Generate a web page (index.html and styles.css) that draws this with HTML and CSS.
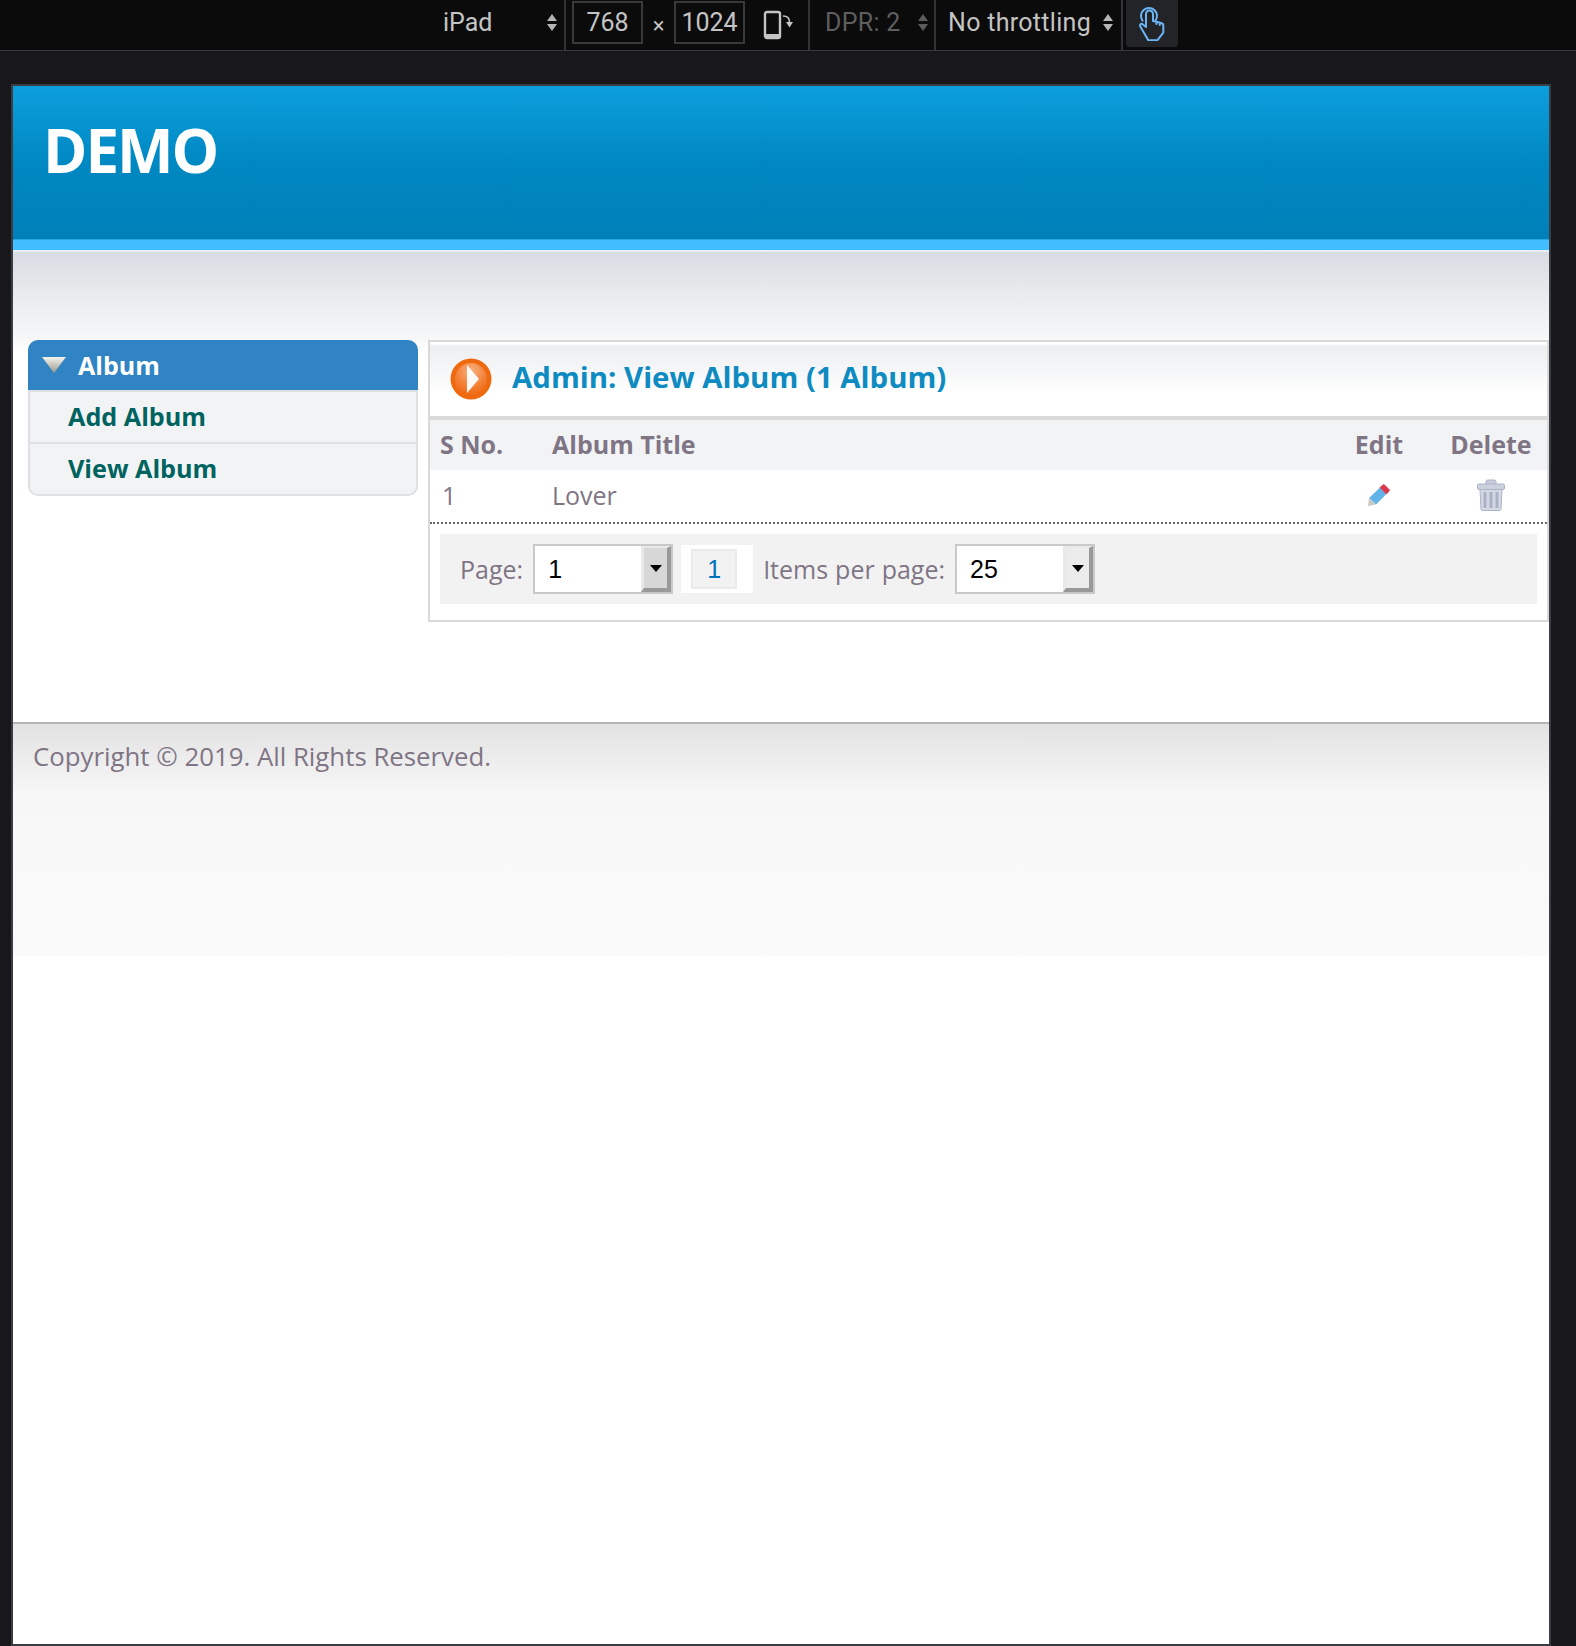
FILE: index.html
```html
<!DOCTYPE html>
<html lang="en">
<head>
<meta charset="utf-8">
<title>Admin: View Album</title>
<link rel="stylesheet" href="styles.css">
</head>
<body>
<div class="toolbar">
  <div class="tb-device"><span class="tb-label">iPad</span><svg class="updown" viewBox="0 0 10 17" width="10" height="17"><path d="M5 0 10 7H0zM5 17 10 10H0z"/></svg></div>
  <div class="tb-sep"></div>
  <div class="tb-dims"><span class="tb-input tb-w">768</span><span class="tb-x">×</span><span class="tb-input tb-h">1024</span>
    <svg class="tb-rotate" viewBox="0 0 32 30" width="32" height="30"><rect x="2" y="2" width="15" height="26" rx="2" fill="none" stroke="#c4c4c4" stroke-width="2.400"/><rect x="3" y="24" width="13" height="3.500" fill="#c4c4c4"/><path d="M20 6c5 0 6.500 2 6.500 6" fill="none" stroke="#c4c4c4" stroke-width="1.600"/><path d="M23 12h7l-3.500 5.500z" fill="#c4c4c4"/></svg>
  </div>
  <div class="tb-sep"></div>
  <div class="tb-dpr"><span>DPR: 2</span><svg class="updown dim" viewBox="0 0 10 17" width="10" height="17"><path d="M5 0 10 7H0zM5 17 10 10H0z"/></svg></div>
  <div class="tb-sep"></div>
  <div class="tb-throttle"><span>No throttling</span><svg class="updown" viewBox="0 0 10 17" width="10" height="17"><path d="M5 0 10 7H0zM5 17 10 10H0z"/></svg></div>
  <div class="tb-sep"></div>
  <div class="tb-touch"><svg viewBox="0 0 28 34" width="28" height="34"><g fill="none" stroke="#6db5f5" stroke-width="2" stroke-linejoin="round" stroke-linecap="round"><path d="M8 20V7a3.500 3.500 0 0 1 7 0v7l3.500.7V17M18.500 14.700l3.300.9V18M21.800 15.600l2 .6c1 .3 1.500 1 1.500 2v7.500l-6 7.600h-9L2.300 19.500c-.8-1.300.6-3.300 2-2.600L8 20"/><path d="M4.500 13.700a8 8 0 1 1 13 0"/></g></svg></div>
</div>
<div class="stage">
  <div class="viewport">
    <header class="hero"><h1 class="brand">DEMO</h1></header>
    <div class="hero-line"></div>
    <div class="subnav">
      <aside class="side">
        <div class="side-head"><svg class="side-tri" viewBox="0 0 26 18" width="26" height="18"><defs><linearGradient id="tri" x1="0" y1="0" x2="0" y2="1"><stop offset="0" stop-color="#f4f4ee"/><stop offset="1" stop-color="#98988c"/></linearGradient></defs><path d="M1 1h24L13 17z" fill="url(#tri)"/></svg><span>Album</span></div>
        <a class="side-item">Add Album</a>
        <a class="side-item">View Album</a>
      </aside>
      <main class="panel">
        <div class="panel-head">
          <svg class="panel-icon" viewBox="0 0 42 42" width="42" height="42"><defs><radialGradient id="orb" cx="0.5" cy="0.25" r="0.8"><stop offset="0" stop-color="#f8b285"/><stop offset="0.55" stop-color="#f4843a"/><stop offset="1" stop-color="#f0640f"/></radialGradient></defs><circle cx="21" cy="21" r="20.500" fill="#ef6a0f"/><circle cx="21" cy="21" r="16" fill="url(#orb)"/><path d="M17 7 29 21 17 35z" fill="#fff" fill-opacity=".95"/></svg>
          <h2 class="panel-title">Admin: View Album (1 Album)</h2>
        </div>
        <table class="grid">
          <thead><tr><th class="c-no">S No.</th><th class="c-title">Album Title</th><th class="c-edit">Edit</th><th class="c-del">Delete</th></tr></thead>
          <tbody><tr><td class="c-no n">1</td><td class="c-title">Lover</td>
            <td class="c-edit"><svg class="soft" viewBox="0 0 24 24" width="24" height="24"><path d="M13 4.500 19.500 11 9 21.500 2 15z" fill="#62b3ea"/><path d="M17 1.500l5.500 5.500-3 4L13 4.500z" fill="#d9394c" stroke="#d9394c" stroke-linejoin="round"/><path d="M2 15l7 6.500L1 23z" fill="#c9c9c4"/></svg></td>
            <td class="c-del"><svg class="soft" viewBox="0 0 28 32" width="28" height="32"><path d="M9 5.500V2.500c0-1 1-1.500 2-1.500h6c1 0 2 .5 2 1.500v3" fill="#c8cedb" stroke="#aab2c6"/><rect x=".5" y="5" width="27" height="5.500" rx="1.500" fill="#ccd1dd" stroke="#aab2c6"/><path d="M3 10.500h22l-1 19.500c0 1-.8 1.500-1.500 1.500h-17c-.8 0-1.500-.5-1.500-1.500z" fill="#d4d8e3" stroke="#aab2c6"/><path d="M6.500 13h3v16h-3zM12.500 13h3v16h-3zM18.500 13h3v16h-3z" fill="#a9b1c5"/></svg></td>
          </tr></tbody>
        </table>
        <div class="pager">
          <span class="pg-label">Page:</span>
          <div class="sel"><span class="sel-val">1</span><span class="sel-btn"><i class="sel-arrow"></i></span></div>
          <div class="pg-links"><a class="pg-num">1</a></div>
          <span class="pg-label spaced">Items per page:</span>
          <div class="sel"><span class="sel-val">25</span><span class="sel-btn light"><i class="sel-arrow"></i></span></div>
        </div>
      </main>
    </div>
    <footer class="foot">Copyright © 2019. All Rights Reserved.</footer>
  </div>
</div>
</body>
</html>
```
FILE: styles.css
```css
* { box-sizing: border-box; }
html, body { margin: 0; padding: 0; height: 1646px; overflow: hidden; }
body { background: #18181a; font-family: "Open Sans", "DejaVu Sans", sans-serif; }

.toolbar { height: 51px; background: #0b0b0c; border-bottom: 1px solid #3a3a3d; display: flex; align-items: stretch; color: #c4c4c4; font: 25px Roboto, sans-serif; }
.tb-device { width: 564px; padding: 0 7px 6px 443px; display: flex; align-items: center; justify-content: space-between; }
.tb-sep { width: 2px; background: #333336; }
.updown { fill: #b5b5b5; flex: none; }
.updown.dim { fill: #5c5c5c; }
.tb-dims { width: 242px; display: flex; align-items: center; padding-left: 6px; }
.tb-input { width: 71px; height: 43px; border: 2px solid #39393c; display: flex; align-items: center; justify-content: center; margin-top: -6px; }
.tb-x { width: 31px; text-align: center; font-size: 22px; }
.tb-rotate { margin-left: 18px; }
.tb-dpr { width: 124px; display: flex; align-items: center; justify-content: space-between; padding: 0 6px 6px 15px; color: #5e5e5e; letter-spacing: .3px; }
.tb-throttle { width: 185px; display: flex; align-items: center; justify-content: space-between; padding: 0 8px 6px 12px; letter-spacing: .3px; }
.tb-touch { width: 52px; height: 47px; margin-left: 3px; background: #232428; border-radius: 0 0 4px 4px; display: flex; align-items: center; justify-content: center; }

.stage { padding: 33px 25px 0 11px; }
.viewport { width: 1540px; height: 1562px; border: 2px solid #3b3d44; background: #fff; }

.hero { height: 153px; background: linear-gradient(#0c9fdd 0, #0088c2 50%, #0080b9 100%); padding: 30px 0 0 30px; }
.brand { margin: 0; font: 700 60px/68px "Open Sans", sans-serif; letter-spacing: -2px; color: #fff; }
.hero-line { height: 13px; background: #40beff; border-top: 1px solid #2aa6e2; border-bottom: 2px solid #e9f0f4; }
.subnav { background: linear-gradient(#d8dbe2 0, #e8eaed 40%, #f6f7f8 85%, #fff 100%) no-repeat; background-size: 100% 100px; padding: 88px 0 0 15px; display: flex; align-items: flex-start; height: 470px; }

.side { width: 390px; flex: none; background: #f2f3f5; border: 2px solid #dfe0e3; border-top: 0; border-radius: 10px; font: 700 25.2px/48px "Open Sans", sans-serif; color: #00635f; margin-right: 10px; }
.side-head { height: 50px; margin: 0 -2px; padding: 0 0 1px 13px; background: #3084c3; color: #fff; border-radius: 10px 10px 0 0; display: flex; align-items: center; gap: 11px; font-size: 25px; }
.side-tri { flex: none; }
.side-item { display: block; height: 52px; border-top: 2px solid #dfe0e3; padding-left: 38px; }

.panel { width: 1121px; height: 282px; border: 2px solid #d9d9d9; background: #fff; }
.panel-head { height: 78px; border-bottom: 4px solid #d9d9d9; background: linear-gradient(#fff 0, #fff 2px, #eceef1 4px, #fff 70%); display: flex; align-items: center; padding-left: 20px; gap: 20px; }
.panel-icon { flex: none; }
.panel-title { margin: 0; padding-bottom: 5px; font: 700 29.4px/40px "Open Sans", sans-serif; color: #0e8bc1; }

.grid { width: 100%; border-collapse: separate; border-spacing: 0; border-bottom: 2px dotted #666; table-layout: fixed; color: #7f7585; font: 25px/48px "Open Sans", sans-serif; }
.grid th { font-weight: 700; background: #f2f3f5; height: 50px; padding: 0 0 2px; text-align: left; }
.grid td { height: 52px; padding: 0 0 3px; }
.c-no { width: 122px; padding-left: 10px !important; }
.c-no.n { padding-left: 12px !important; }
.c-title { width: auto; }
.c-edit { width: 112px; text-align: center !important; vertical-align: middle; }
.c-del { width: 112px; text-align: center !important; vertical-align: middle; }
.grid .soft { display: block; margin: 0 auto; filter: blur(.4px); }

.pager { margin: 10px 10px 0; height: 70px; background: #f2f2f2; display: flex; align-items: center; padding-left: 20px; color: #7f7585; font: 25px "Open Sans", sans-serif; }
.sel { width: 140px; height: 50px; margin-left: 10px; border: 2px solid #c9c9c9; background: #fff; display: flex; color: #000; font: 25px "Liberation Sans", sans-serif; }
.sel-val { flex: 1; line-height: 46px; padding-left: 13px; }
.sel-btn { width: 30px; background: #d7d7d7; border-style: solid; border-width: 2px 4px 4px 3px; border-color: #e9e9e9 #999 #999 #e9e9e9; display: flex; align-items: center; justify-content: center; }
.sel-btn.light { background: #ececec; }
.sel-arrow { display: block; width: 0; height: 0; border: 6px solid transparent; border-top: 7px solid #000; border-bottom: 0; }
.pg-links { width: 72px; height: 48px; margin: 0 10px 0 8px; padding-left: 10px; background: #fff; display: flex; align-items: center; }
.pg-num { width: 46px; height: 40px; background: #f2f2f2; border: 2px solid #eaeaea; color: #0071bc; font: 25px/36px "Liberation Sans", sans-serif; text-align: center; }
.spaced { word-spacing: .5px; }

.foot { height: 234px; border-top: 2px solid #b4b4b4; background: linear-gradient(#e2e2e2 0, #f7f7f7 30%, #fafafa 100%); color: #7f7585; font: 25.800px/36px "Open Sans", sans-serif; padding: 14px 0 0 20px; }
```
